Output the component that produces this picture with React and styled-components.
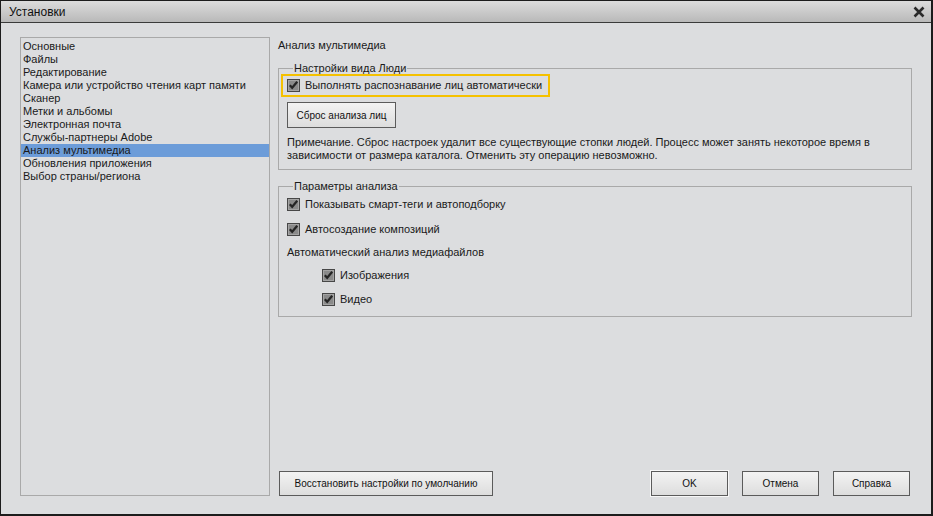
import React from "react";
import styled, { createGlobalStyle } from "styled-components";

const Global = createGlobalStyle`
  html, body { margin: 0; padding: 0; background: #dcdddf; }
  body { font-family: "Liberation Sans", Arial, sans-serif; color: #1a1a1a; }
  * { box-sizing: border-box; }
`;

const Window = styled.div`
  width: 933px;
  height: 516px;
  border: 1px solid #1c1c1c;
  border-width: 1px 2px 2px 1px;
  background: #dcdddf;
  display: flex;
  flex-direction: column;
`;

const TitleBar = styled.div`
  height: 22px;
  flex: none;
  display: flex;
  align-items: center;
  justify-content: space-between;
  padding: 0 6px 0 8px;
  background: linear-gradient(#dcdcdc, #b9b9b9);
  border-bottom: 1px solid #3a3a3a;
  font-size: 12px;
  color: #111;
`;

const CloseBtn = styled.svg`
  width: 12px;
  height: 12px;
  display: block;
`;

const Body = styled.div`
  flex: 1;
  display: flex;
  gap: 8px;
  padding: 14px 19px 18px 19px;
  min-height: 0;
`;

const List = styled.ul`
  list-style: none;
  margin: 0;
  padding: 2px 0;
  width: 250px;
  flex: none;
  border: 1px solid #a9a9a9;
  font-size: 11px;
`;

const Item = styled.li`
  height: 13px;
  line-height: 13px;
  padding-left: 2px;
  white-space: nowrap;
  background: ${(p) => (p.$selected ? "#6c9cd9" : "transparent")};
`;

const Main = styled.div`
  flex: 1;
  display: flex;
  flex-direction: column;
  font-size: 11px;
`;

const Heading = styled.div`
  line-height: 13px;
  margin-top: 2px;
  margin-bottom: 16px;
`;

const Group = styled.section`
  border: 1px solid #a9a9a9;
  padding: 0 8px ${(p) => p.$pb || 0}px 8px;
  margin-top: ${(p) => p.$mt || 0}px;
`;

const GroupTitle = styled.div`
  display: table;
  margin: -7px 0 0 6px;
  padding: 0 1px;
  background: #dcdddf;
  line-height: 13px;
`;

const Highlight = styled.div`
  display: flex;
  margin: -1px 0 0 -6px;
  border: 2px solid #f5c100;
  padding: 0 4px;
  height: 23px;
  width: 269px;
  align-items: center;
`;

const CheckRow = styled.label`
  display: flex;
  align-items: center;
  gap: 5px;
  height: ${(p) => p.$h || 25}px;
  margin-top: ${(p) => p.$mt || 0}px;
  padding-left: ${(p) => p.$indent || 0}px;
  line-height: 13px;
  white-space: nowrap;
`;

const Text = styled.div`
  line-height: 13px;
  height: ${(p) => p.$h || 23}px;
  display: flex;
  align-items: center;
`;

const Note = styled.p`
  margin: 8px 0 0 0;
  line-height: 13px;
`;

const Button = styled.button`
  display: block;
  height: ${(p) => p.$hgt || 25}px;
  width: ${(p) => p.$w}px;
  border: 1px solid #5b5b5b;
  background: linear-gradient(#f3f3f3, #dddddd);
  font-family: "Liberation Sans", Arial, sans-serif;
  font-size: 10px;
  color: #111;
  padding: 0;
  box-shadow: ${(p) => (p.$default ? "0 0 0 1px #f7f7f7" : "none")};
`;

const ResetButton = styled(Button)`
  margin-top: 5px;
`;

const Footer = styled.div`
  margin-top: auto;
  display: flex;
  gap: 14px;
  padding: 0 2px 0 1px;
  & > :first-child { margin-right: auto; }
`;

const CheckBox = () => (
  <svg width="13" height="13" viewBox="0 0 13 13" style={{ flex: "none" }}>
    <rect x="0.5" y="0.5" width="12" height="12" fill="#8a8a8a" stroke="#474747" />
    <rect x="1.5" y="1.5" width="10" height="10" fill="none" stroke="#a4a4a4" />
    <polyline points="2.8,6.2 5.2,8.8 10.2,2.8" fill="none" stroke="#242424" strokeWidth="2.2" />
  </svg>
);

const items = [
  "Основные",
  "Файлы",
  "Редактирование",
  "Камера или устройство чтения карт памяти",
  "Сканер",
  "Метки и альбомы",
  "Электронная почта",
  "Службы-партнеры Adobe",
  "Анализ мультимедиа",
  "Обновления приложения",
  "Выбор страны/региона",
];

export default function App() {
  return (
    <>
      <Global />
      <Window>
        <TitleBar>
          <span>Установки</span>
          <CloseBtn viewBox="0 0 12 12">
            <path d="M1.5 1.5 L10.5 10.5 M10.5 1.5 L1.5 10.5" stroke="#2a2a2a" strokeWidth="2.6" />
          </CloseBtn>
        </TitleBar>
        <Body>
          <List>
            {items.map((t) => (
              <Item key={t} $selected={t === "Анализ мультимедиа"}>{t}</Item>
            ))}
          </List>
          <Main>
            <Heading>Анализ мультимедиа</Heading>
            <Group $pb={7}>
              <GroupTitle>Настройки вида Люди</GroupTitle>
              <Highlight>
                <CheckRow $h={19}>
                  <CheckBox />
                  Выполнять распознавание лиц автоматически
                </CheckRow>
              </Highlight>
              <ResetButton $w={109} $hgt={26}>Сброс анализа лиц</ResetButton>
              <Note>
                Примечание. Сброс настроек удалит все существующие стопки людей. Процесс может занять некоторое время в
                зависимости от размера каталога. Отменить эту операцию невозможно.
              </Note>
            </Group>
            <Group $pb={4} $mt={16}>
              <GroupTitle>Параметры анализа</GroupTitle>
              <CheckRow $mt={-1}>
                <CheckBox />
                Показывать смарт-теги и автоподборку
              </CheckRow>
              <CheckRow>
                <CheckBox />
                Автосоздание композиций
              </CheckRow>
              <Text $h={21}>Автоматический анализ медиафайлов</Text>
              <CheckRow $indent={35} $h={24}>
                <CheckBox />
                Изображения
              </CheckRow>
              <CheckRow $indent={35}>
                <CheckBox />
                Видео
              </CheckRow>
            </Group>
            <Footer>
              <Button $w={214}>Восстановить настройки по умолчанию</Button>
              <Button $w={77} $default>OK</Button>
              <Button $w={77}>Отмена</Button>
              <Button $w={77}>Справка</Button>
            </Footer>
          </Main>
        </Body>
      </Window>
    </>
  );
}
